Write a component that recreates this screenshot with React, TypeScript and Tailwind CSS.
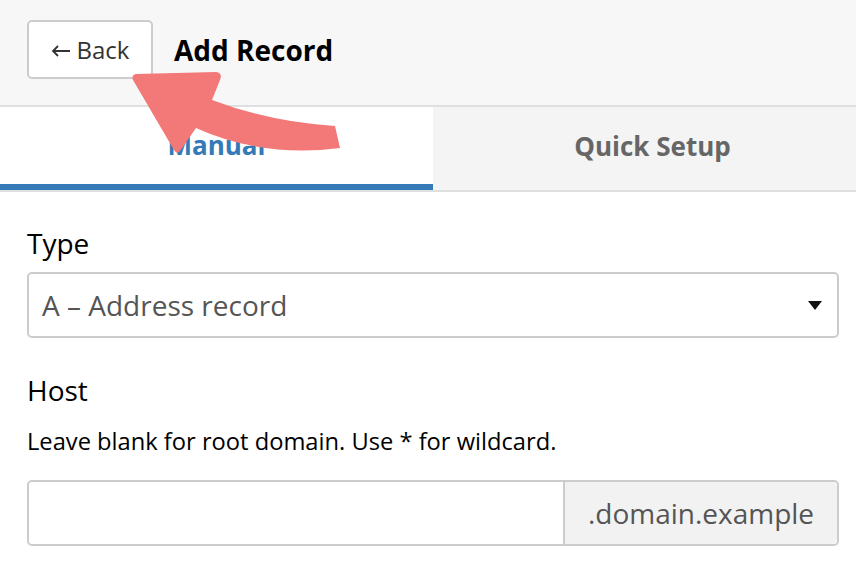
import { useState } from 'react'

const font = { fontFamily: '"Open Sans", "Noto Sans", sans-serif' }

function PointerArrow() {
  // curved callout arrow pointing at the Back button
  return (
    <svg
      className="pointer-events-none absolute left-0 top-0"
      width="360"
      height="170"
      viewBox="0 0 360 170"
    >
      <path
        d="M136 74 L216 72 Q223 73 220 80 L212 100 Q270 122 335 126 L340 148 Q262 158 196 128 L180 151 Q177 155 174 150 L133 80 Q131 75 136 74 Z"
        fill="#f37878"
      />
    </svg>
  )
}

export default function App() {
  const [tab, setTab] = useState<'manual' | 'quick'>('manual')

  return (
    <div className="relative min-h-[576px] bg-white text-[#333]" style={font}>
      <header className="flex h-[107px] items-center gap-[21px] border-b-2 border-[#e0e0e0] bg-[#f7f7f7] px-[27px] pb-[6px]">
        <button
          type="button"
          className="flex h-[59px] w-[126px] items-center justify-center gap-[6px] rounded-[5px] border-2 border-[#cccccc] bg-white text-[24px] text-[#333]"
        >
          <svg width="20" height="14" viewBox="0 0 20 14" className="mt-[2px]">
            <path d="M19 7 H2 M7 2 L2 7 L7 12" stroke="#333" strokeWidth="1.8" fill="none" />
          </svg>
          Back
        </button>
        <h1 className="text-[28px] font-bold text-black">Add Record</h1>
      </header>

      <div className="flex h-[85px] border-b-2 border-[#dedede]">
        <button
          type="button"
          onClick={() => setTab('manual')}
          className={
            tab === 'manual'
              ? 'w-[433px] border-b-[6px] border-[#337ab7] bg-white text-[26px] font-bold text-[#337ab7]'
              : 'w-[433px] bg-[#f4f4f4] text-[26px] font-bold text-[#666]'
          }
        >
          Manual
        </button>
        <button
          type="button"
          onClick={() => setTab('quick')}
          className={
            tab === 'quick'
              ? 'flex-1 border-b-[6px] border-[#337ab7] bg-white pb-[4px] pl-[16px] text-[26px] font-bold text-[#337ab7]'
              : 'flex-1 bg-[#f4f4f4] pb-[4px] pl-[16px] text-[26px] font-bold text-[#666]'
          }
        >
          Quick Setup
        </button>
      </div>

      <div className="px-[27px] pr-[17px] pt-[34px]">
        <label className="block text-[28px] leading-[34px] text-black">Type</label>
        <div className="relative mt-[12px]">
          <select className="h-[66px] w-full appearance-none rounded-[5px] border-2 border-[#cccccc] bg-white pl-[13px] text-[28px] text-[#555]">
            <option>A – Address record</option>
          </select>
          <svg
            className="pointer-events-none absolute right-[17px] top-[29px]"
            width="14"
            height="9"
            viewBox="0 0 14 9"
          >
            <path d="M0 0 H14 L7 9 Z" fill="#111" />
          </svg>
        </div>

        <label className="mt-[35px] block text-[28px] leading-[34px] text-black">Host</label>
        <p className="mt-[19px] text-[23.7px] leading-[30px] text-black">
          Leave blank for root domain. Use * for wildcard.
        </p>
        <div className="mt-[24px] flex h-[66px] rounded-[5px] border-2 border-[#cccccc]">
          <input className="min-w-0 flex-1 rounded-l-[5px] bg-white px-[14px] text-[28px] outline-none" />
          <span className="flex w-[274px] items-center justify-center rounded-r-[5px] border-l-2 border-[#cccccc] bg-[#f2f2f2] text-[28px] text-[#555]">
            .domain.example
          </span>
        </div>
      </div>

      <PointerArrow />
    </div>
  )
}
